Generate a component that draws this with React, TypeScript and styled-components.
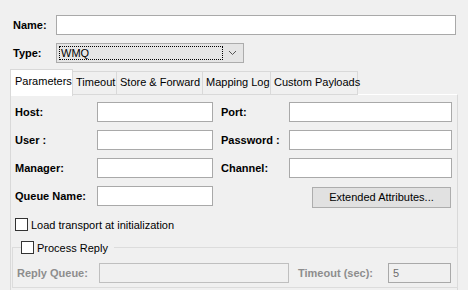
import React from 'react'
import styled, { createGlobalStyle } from 'styled-components'

const GlobalStyle = createGlobalStyle`
  html, body {
    margin: 0;
    padding: 0;
    background: #f0f0f0;
  }
  body {
    font-family: 'Liberation Sans', Arial, sans-serif;
    font-size: 11px;
    color: #000;
  }
`

const Window = styled.div`
  width: 468px;
  height: 290px;
  overflow: hidden;
  background: #f0f0f0;
  padding-top: 15px;
  box-sizing: border-box;
`

const HeaderRow = styled.div`
  display: flex;
  align-items: center;
  height: 20px;
  padding: 0 12px 0 13px;
  margin-bottom: 8px;
`

const HeaderLabel = styled.label`
  width: 43px;
  font-weight: bold;
`

const TextBox = styled.div<{ $width?: number; $disabled?: boolean; $filled?: boolean }>`
  box-sizing: border-box;
  height: 20px;
  width: ${(p) => (p.$width ? `${p.$width}px` : 'auto')};
  flex: ${(p) => (p.$width ? '0 0 auto' : '1 1 auto')};
  background: ${(p) => (p.$disabled ? '#f0f0f0' : '#fff')};
  border: 1px solid ${(p) => (p.$disabled && !p.$filled ? '#bfbfbf' : '#a9a9a9')};
  color: #6d6d6d;
  padding: 2px 0 0 4px;
  line-height: 14px;
`

const Combo = styled.div`
  box-sizing: border-box;
  width: 188px;
  height: 20px;
  display: flex;
  align-items: center;
  background: #e5e5e5;
  border: 1px solid #acacac;
  padding: 2px;
`

const ComboValue = styled.span`
  flex: 1;
  height: 14px;
  line-height: 13px;
  border: 1px dotted #000;
  box-sizing: border-box;
  padding-left: 1px;
`

const Chevron = styled.svg`
  width: 17px;
  height: 14px;
  margin-left: 1px;
`

const TabStrip = styled.div`
  display: flex;
  align-items: flex-end;
  margin: -3px 0 0 10px;
  height: 27px;
  position: relative;
  z-index: 1;
`

const Tab = styled.div<{ $width: number; $active?: boolean }>`
  box-sizing: border-box;
  width: ${(p) => p.$width}px;
  height: ${(p) => (p.$active ? 27 : 24)}px;
  margin-bottom: ${(p) => (p.$active ? -1 : 0)}px;
  margin-left: -1px;
  border: 1px solid #d9d9d9;
  border-bottom: ${(p) => (p.$active ? 'none' : '1px solid #d9d9d9')};
  background: ${(p) => (p.$active ? '#fff' : '#f0f0f0')};
  padding-left: ${(p) => (p.$active ? 4 : 3)}px;
  padding-top: ${(p) => (p.$active ? 5 : 4)}px;
  white-space: nowrap;
  &:first-child {
    margin-left: 0;
  }
`

const Panel = styled.div`
  box-sizing: border-box;
  margin: -1px 0 0 10px;
  width: 448px;
  height: 200px;
  border: 1px solid #d9d9d9;
  border-top-color: #fff;
  padding-top: 7px;
`

const FieldGrid = styled.div`
  display: grid;
  grid-template-columns: 82px 116px 8px 68px 163px;
  grid-auto-rows: 20px;
  row-gap: 8px;
  align-items: center;
  margin-left: 4px;
`

const FieldLabel = styled.label<{ $col: number; $disabled?: boolean }>`
  grid-column: ${(p) => p.$col};
  font-weight: bold;
  color: ${(p) => (p.$disabled ? '#8d8d8d' : '#000')};
`

const GridBox = styled(TextBox)<{ $col: number }>`
  grid-column: ${(p) => p.$col};
`

const Button = styled.div`
  grid-column: 4 / span 2;
  justify-self: end;
  box-sizing: border-box;
  width: 139px;
  height: 21px;
  margin: 2px 1px 0 0;
  background: #e1e1e1;
  border: 1px solid #adadad;
  display: flex;
  align-items: center;
  justify-content: center;
`

const CheckRow = styled.label`
  display: flex;
  align-items: center;
  gap: 3px;
  margin: 12px 0 0 4px;
  height: 13px;
`

const Box = styled.span`
  display: inline-block;
  box-sizing: border-box;
  width: 13px;
  height: 13px;
  background: #fff;
  border: 1px solid #333;
`

const Group = styled.fieldset`
  margin: 10px 0 0 1px;
  padding: 9px 0 4px 4px;
  border: 1px solid #dcdcdc;
  box-sizing: border-box;
  width: 446px;
  min-width: 0;
`

const Legend = styled.legend`
  display: flex;
  align-items: center;
  gap: 3px;
  padding: 0 6px 0 0;
  margin-left: 4px;
  height: 13px;
`

const ReplyRow = styled.div`
  display: grid;
  grid-template-columns: 82px 190px 9px 90px 63px;
  align-items: center;
  height: 20px;
`

export default function App() {
  return (
    <>
      <GlobalStyle />
      <Window>
        <HeaderRow>
          <HeaderLabel>Name:</HeaderLabel>
          <TextBox />
        </HeaderRow>
        <HeaderRow>
          <HeaderLabel>Type:</HeaderLabel>
          <Combo>
            <ComboValue>WMQ</ComboValue>
            <Chevron viewBox="0 0 17 14">
              <polyline points="5,5 8.5,8.5 12,5" fill="none" stroke="#555" strokeWidth="1" />
            </Chevron>
          </Combo>
        </HeaderRow>
        <TabStrip>
          <Tab $width={63} $active>Parameters</Tab>
          <Tab $width={45}>Timeout</Tab>
          <Tab $width={87}>Store &amp; Forward</Tab>
          <Tab $width={69}>Mapping Log</Tab>
          <Tab $width={88}>Custom Payloads</Tab>
        </TabStrip>
        <Panel>
          <FieldGrid>
            <FieldLabel $col={1}>Host:</FieldLabel>
            <GridBox $col={2} />
            <FieldLabel $col={4}>Port:</FieldLabel>
            <GridBox $col={5} />
            <FieldLabel $col={1}>User :</FieldLabel>
            <GridBox $col={2} />
            <FieldLabel $col={4}>Password :</FieldLabel>
            <GridBox $col={5} />
            <FieldLabel $col={1}>Manager:</FieldLabel>
            <GridBox $col={2} />
            <FieldLabel $col={4}>Channel:</FieldLabel>
            <GridBox $col={5} />
            <FieldLabel $col={1}>Queue Name:</FieldLabel>
            <GridBox $col={2} />
            <Button>Extended Attributes...</Button>
          </FieldGrid>
          <CheckRow>
            <Box />
            Load transport at initialization
          </CheckRow>
          <Group>
            <Legend>
              <Box />
              Process Reply
            </Legend>
            <ReplyRow>
              <FieldLabel $col={1} $disabled>Reply Queue:</FieldLabel>
              <TextBox $disabled />
              <span />
              <FieldLabel $col={4} $disabled>Timeout (sec):</FieldLabel>
              <TextBox $disabled $filled>5</TextBox>
            </ReplyRow>
          </Group>
        </Panel>
      </Window>
    </>
  )
}
